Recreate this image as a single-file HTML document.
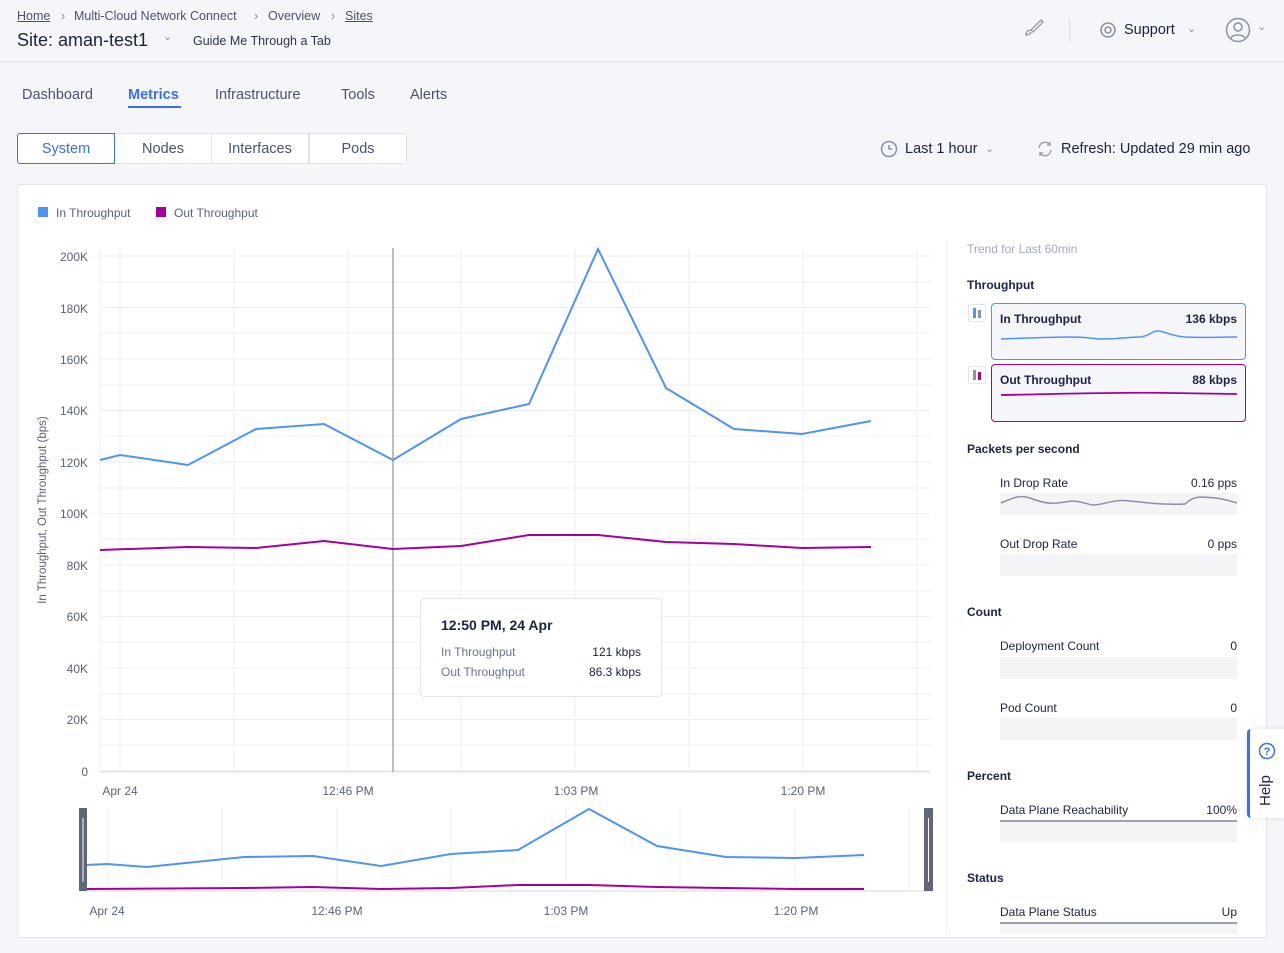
<!DOCTYPE html>
<html><head><meta charset="utf-8"><style>
*{margin:0;padding:0;box-sizing:border-box}
body{width:1284px;height:953px;background:#f5f6f9;font-family:"Liberation Sans",sans-serif;color:#1b2346;position:relative;overflow:hidden}
.a{position:absolute;white-space:nowrap}
.bc{font-size:12.5px;color:#4a5270;top:9px}
.tab{top:87px;font-size:14.5px;color:#4a5270}
.seg{position:absolute;top:133px;height:31px;border:1px solid #e0e3ea;background:#fff;font-size:14.5px;color:#4a5270;text-align:center;line-height:31px;width:98px}
.rp{font-size:12px;color:#1b2346}
.h{font-weight:bold;font-size:12px;color:#1b2346}
.bar{position:absolute;left:1000px;width:237px;background:#f3f4f6}
</style></head><body>
<div class="a bc" style="left:17px;text-decoration:underline">Home</div>
<div class="a bc" style="left:61px;color:#8a91a8">›</div>
<div class="a bc" style="left:74px">Multi-Cloud Network Connect</div>
<div class="a bc" style="left:254px;color:#8a91a8">›</div>
<div class="a bc" style="left:268px">Overview</div>
<div class="a bc" style="left:331px;color:#8a91a8">›</div>
<div class="a bc" style="left:345px;text-decoration:underline">Sites</div>
<div class="a" style="left:17px;top:30px;font-size:18px;color:#1b2346">Site: aman-test1</div>
<div class="a" style="left:163px;top:30px;font-size:11px;color:#8a91a8">⌄</div>
<div class="a" style="left:193px;top:34px;font-size:12.5px;color:#2c3452">Guide Me Through a Tab</div>
<svg class="a" style="left:1020px;top:17px" width="26" height="24" viewBox="0 0 26 24" fill="none" stroke="#9aa1b4" stroke-width="1.5"><path d="M21 3l2 2-10 10-2-2z M11 13c-3 0-5 2-5 5 2 0 5-1 5-3"/></svg>
<div class="a" style="left:1069px;top:18px;width:1px;height:24px;background:#dde0e7"></div>
<svg class="a" style="left:1099px;top:21px" width="18" height="18" viewBox="0 0 18 18" fill="none" stroke="#8a91a8" stroke-width="1.5"><circle cx="9" cy="9" r="7"/><circle cx="9" cy="9" r="3"/></svg>
<div class="a" style="left:1124px;top:22px;font-size:14.5px">Support</div>
<div class="a" style="left:1187px;top:22px;font-size:11px;color:#8a91a8">⌄</div>
<svg class="a" style="left:1225px;top:17px" width="26" height="26" viewBox="0 0 26 26" fill="none" stroke="#8a91a8" stroke-width="1.5"><circle cx="13" cy="13" r="11.5"/><circle cx="13" cy="10" r="4"/><path d="M6 21c2-4 12-4 14 0"/></svg>
<div class="a" style="left:1257px;top:20px;font-size:11px;color:#8a91a8">⌄</div>
<div class="a" style="left:0;top:61px;width:1284px;height:1px;background:#e0e3ea"></div>

<div class="a tab" style="left:22px">Dashboard</div>
<div class="a tab" style="left:128px;color:#3a6ff0;font-weight:bold">Metrics</div>
<div class="a" style="left:128px;top:106px;width:53px;height:2px;background:#3a6ff0"></div>
<div class="a tab" style="left:215px">Infrastructure</div>
<div class="a tab" style="left:341px">Tools</div>
<div class="a tab" style="left:410px">Alerts</div>

<div class="seg" style="left:17px;border-color:#3a6ff0;color:#3a6ff0;border-radius:3px 0 0 3px;z-index:2">System</div>
<div class="seg" style="left:114px">Nodes</div>
<div class="seg" style="left:211px">Interfaces</div>
<div class="seg" style="left:309px;border-radius:0 3px 3px 0">Pods</div>

<svg class="a" style="left:880px;top:140px" width="18" height="18" viewBox="0 0 18 18" fill="none" stroke="#8a91a8" stroke-width="1.5"><circle cx="9" cy="9" r="7.5"/><path d="M9 5v4h3"/></svg>
<div class="a" style="left:905px;top:141px;font-size:14.5px">Last 1 hour</div>
<div class="a" style="left:985px;top:142px;font-size:11px;color:#8a91a8">⌄</div>
<svg class="a" style="left:1036px;top:140px" width="18" height="18" viewBox="0 0 18 18" fill="none" stroke="#9aa1b4" stroke-width="1.5"><path d="M3 8a6 6 0 0 1 11-3M15 10a6 6 0 0 1-11 3M14 2v3h-3M4 16v-3h3"/></svg>
<div class="a" style="left:1061px;top:141px;font-size:14.5px">Refresh: Updated 29 min ago</div>

<div class="a" style="left:17px;top:184px;width:1250px;height:754px;background:#fff;border:1px solid #e3e5eb;border-radius:3px"></div>
<div class="a" style="left:946px;top:240px;width:1px;height:694px;background:#eceef2"></div>

<div class="a" style="left:38px;top:207px;width:10px;height:10px;background:#4d94f7"></div>
<div class="a" style="left:56px;top:206px;font-size:12px;color:#5a627c">In Throughput</div>
<div class="a" style="left:156px;top:207px;width:10px;height:10px;background:#a3009c"></div>
<div class="a" style="left:174px;top:206px;font-size:12px;color:#5a627c">Out Throughput</div>

<svg class="a" style="left:0;top:0" width="946" height="953">
<g stroke="#eceef2" stroke-width="1">
<line x1="100" y1="745" x2="930" y2="745"/><line x1="100" y1="719.5" x2="930" y2="719.5"/><line x1="100" y1="694" x2="930" y2="694"/><line x1="100" y1="668" x2="930" y2="668"/><line x1="100" y1="642" x2="930" y2="642"/><line x1="100" y1="616.5" x2="930" y2="616.5"/><line x1="100" y1="591" x2="930" y2="591"/><line x1="100" y1="565" x2="930" y2="565"/><line x1="100" y1="539" x2="930" y2="539"/><line x1="100" y1="513.5" x2="930" y2="513.5"/><line x1="100" y1="488" x2="930" y2="488"/><line x1="100" y1="462" x2="930" y2="462"/><line x1="100" y1="436" x2="930" y2="436"/><line x1="100" y1="410.5" x2="930" y2="410.5"/><line x1="100" y1="385" x2="930" y2="385"/><line x1="100" y1="359" x2="930" y2="359"/><line x1="100" y1="333" x2="930" y2="333"/><line x1="100" y1="307.5" x2="930" y2="307.5"/><line x1="100" y1="282" x2="930" y2="282"/><line x1="100" y1="256" x2="930" y2="256"/>
<line x1="120" y1="248" x2="120" y2="772"/><line x1="234" y1="248" x2="234" y2="772"/><line x1="348" y1="248" x2="348" y2="772"/><line x1="461" y1="248" x2="461" y2="772"/><line x1="575" y1="248" x2="575" y2="772"/><line x1="689" y1="248" x2="689" y2="772"/><line x1="803" y1="248" x2="803" y2="772"/><line x1="917" y1="248" x2="917" y2="772"/>
<line x1="100" y1="248" x2="100" y2="772"/>
</g>
<line x1="100" y1="771.5" x2="930" y2="771.5" stroke="#e3e5eb" stroke-width="2"/>
<line x1="393" y1="248" x2="393" y2="772" stroke="#a5a8b0" stroke-width="1.5"/>
<polyline fill="none" stroke="#4d94f7" stroke-width="2" points="100,460 120,455 188,465 256,429 324,424 393,460 461,419 529,404 598,249 666,388 734,429 802,434 871,421"/>
<polyline fill="none" stroke="#a3009c" stroke-width="2" points="100,550 188,547 256,548 324,541 393,549 461,546 529,535 598,535 666,542 734,544 802,548 871,547"/>
<g font-family="Liberation Sans" font-size="12" fill="#5a627c" text-anchor="end">
<text x="88" y="261">200K</text><text x="88" y="313">180K</text><text x="88" y="364">160K</text><text x="88" y="415">140K</text><text x="88" y="467">120K</text><text x="88" y="518">100K</text><text x="88" y="570">80K</text><text x="88" y="621">60K</text><text x="88" y="673">40K</text><text x="88" y="724">20K</text><text x="88" y="776">0</text>
</g>
<text transform="translate(46,510) rotate(-90)" text-anchor="middle" font-family="Liberation Sans" font-size="11.5" fill="#5a627c">In Throughput, Out Throughput (bps)</text>
<g font-family="Liberation Sans" font-size="12" fill="#5a627c" text-anchor="middle">
<text x="120" y="795">Apr 24</text><text x="348" y="795">12:46 PM</text><text x="576" y="795">1:03 PM</text><text x="803" y="795">1:20 PM</text>
<text x="107" y="915">Apr 24</text><text x="337" y="915">12:46 PM</text><text x="566" y="915">1:03 PM</text><text x="796" y="915">1:20 PM</text>
</g>
<g stroke="#eceef2"><line x1="108" y1="808" x2="108" y2="890"/><line x1="222" y1="808" x2="222" y2="890"/><line x1="337" y1="808" x2="337" y2="890"/><line x1="451" y1="808" x2="451" y2="890"/><line x1="566" y1="808" x2="566" y2="890"/><line x1="680" y1="808" x2="680" y2="890"/><line x1="795" y1="808" x2="795" y2="890"/><line x1="909" y1="808" x2="909" y2="890"/></g>
<line x1="80" y1="891" x2="933" y2="891" stroke="#e3e5eb" stroke-width="1.5"/>
<polyline fill="none" stroke="#4d94f7" stroke-width="2" points="86,865 107,864 147,867 244,857 313,856 381,866 451,854 518,850 589,809 657,846 726,857 796,858 864,855"/>
<polyline fill="none" stroke="#a3009c" stroke-width="2" points="86,889 244,888 313,887 381,889 451,888 518,885 589,885 657,887 726,888 796,889 864,889"/>
<rect x="79" y="808" width="8" height="83" fill="#5f6679"/><line x1="83" y1="818" x2="83" y2="882" stroke="#fff"/>
<rect x="924" y="808" width="9" height="83" fill="#5f6679"/><line x1="928.5" y1="818" x2="928.5" y2="882" stroke="#fff"/>
</svg>

<div class="a" style="left:420px;top:598px;width:242px;height:99px;background:#fff;border:1px solid #e3e5eb;border-radius:4px"></div>
<div class="a" style="left:441px;top:617px;font-size:14px;font-weight:bold">12:50 PM, 24 Apr</div>
<div class="a" style="left:441px;top:645px;font-size:12px;color:#6b7390">In Throughput</div>
<div class="a" style="left:591px;top:645px;font-size:12px;width:50px;text-align:right">121 kbps</div>
<div class="a" style="left:441px;top:665px;font-size:12px;color:#6b7390">Out Throughput</div>
<div class="a" style="left:571px;top:665px;font-size:12px;width:70px;text-align:right">86.3 kbps</div>

<div class="a" style="left:967px;top:242px;font-size:12px;color:#a3a9bb">Trend for Last 60min</div>
<div class="a h" style="left:967px;top:278px">Throughput</div>
<div class="a" style="left:968px;top:304px;width:18px;height:18px;border:1px solid #e3e5eb;border-radius:2px;background:#fff"><div class="a" style="left:4px;top:3px;width:3px;height:10px;background:#4d94f7"></div><div class="a" style="left:9px;top:5px;width:3px;height:8px;background:#8a91a8"></div></div>
<div class="a" style="left:991px;top:303px;width:255px;height:57px;border:1px solid #4d94f7;border-radius:4px;background:#f5f6f9"></div>
<div class="a h" style="left:1000px;top:312px">In Throughput</div>
<div class="a h" style="left:1150px;top:312px;width:87px;text-align:right">136 kbps</div>
<div class="a" style="left:968px;top:366px;width:18px;height:18px;border:1px solid #e3e5eb;border-radius:2px;background:#fff"><div class="a" style="left:4px;top:3px;width:3px;height:10px;background:#8a91a8"></div><div class="a" style="left:9px;top:5px;width:3px;height:8px;background:#a3009c"></div></div>
<div class="a" style="left:991px;top:364px;width:255px;height:58px;border:1px solid #a3009c;border-radius:4px;background:#f5f6f9"></div>
<div class="a h" style="left:1000px;top:373px">Out Throughput</div>
<div class="a h" style="left:1150px;top:373px;width:87px;text-align:right">88 kbps</div>
<svg class="a" style="left:1000px;top:325px" width="238" height="75" fill="none"><path d="M1 14 C30 13 50 12 70 12 C90 12 95 14 100 14 C120 14 130 12 140 12 C150 11 152 6 157 6 C165 6 170 11 185 12 C200 13 220 12 237 12" stroke="#4d94f7" stroke-width="1.5"/><path d="M1 70 C60 69 120 67 170 68 L237 69" stroke="#a3009c" stroke-width="1.8"/></svg>

<div class="a h" style="left:967px;top:442px">Packets per second</div>
<div class="a rp" style="left:1000px;top:476px">In Drop Rate</div><div class="a rp" style="left:1150px;top:476px;width:87px;text-align:right">0.16 pps</div>
<div class="bar" style="top:493px;height:22px"></div>
<svg class="a" style="left:1000px;top:493px" width="238" height="22" fill="none"><path d="M1 10 C15 4 20 2 30 5 C40 9 50 12 65 9 C80 6 85 12 95 12 C110 10 115 6 130 8 C150 10 165 12 185 11 C195 2 200 4 215 5 C225 6 230 8 237 10" stroke="#8a91a8" stroke-width="1.5"/></svg>
<div class="a rp" style="left:1000px;top:537px">Out Drop Rate</div><div class="a rp" style="left:1150px;top:537px;width:87px;text-align:right">0 pps</div>
<div class="bar" style="top:554px;height:22px"></div>

<div class="a h" style="left:967px;top:605px">Count</div>
<div class="a rp" style="left:1000px;top:639px">Deployment Count</div><div class="a rp" style="left:1150px;top:639px;width:87px;text-align:right">0</div>
<div class="bar" style="top:657px;height:22px"></div>
<div class="a rp" style="left:1000px;top:701px">Pod Count</div><div class="a rp" style="left:1150px;top:701px;width:87px;text-align:right">0</div>
<div class="bar" style="top:718px;height:22px"></div>

<div class="a h" style="left:967px;top:769px">Percent</div>
<div class="a rp" style="left:1000px;top:803px">Data Plane Reachability</div><div class="a rp" style="left:1150px;top:803px;width:87px;text-align:right">100%</div>
<div class="bar" style="top:820px;height:22px;border-top:2px solid #9aa1b4"></div>
<div class="a h" style="left:967px;top:871px">Status</div>
<div class="a rp" style="left:1000px;top:905px">Data Plane Status</div><div class="a rp" style="left:1150px;top:905px;width:87px;text-align:right">Up</div>
<div class="bar" style="top:922px;height:12px;border-top:2px solid #9aa1b4"></div>

<div class="a" style="left:1247px;top:729px;width:40px;height:89px;background:#fff;border-left:3px solid #3a6ff0;border-radius:4px 0 0 4px;box-shadow:0 0 6px rgba(0,0,0,.12)"></div>
<svg class="a" style="left:1258px;top:742px" width="18" height="18" fill="none"><circle cx="9" cy="9" r="7.5" stroke="#3a6ff0" stroke-width="1.5"/><text x="9" y="13" font-family="Liberation Sans" font-size="11" font-weight="bold" fill="#3a6ff0" text-anchor="middle">?</text></svg>
<div class="a" style="left:1257px;top:806px;font-size:15px;color:#1b2346;transform:rotate(-90deg);transform-origin:0 0">Help</div>
</body></html>
